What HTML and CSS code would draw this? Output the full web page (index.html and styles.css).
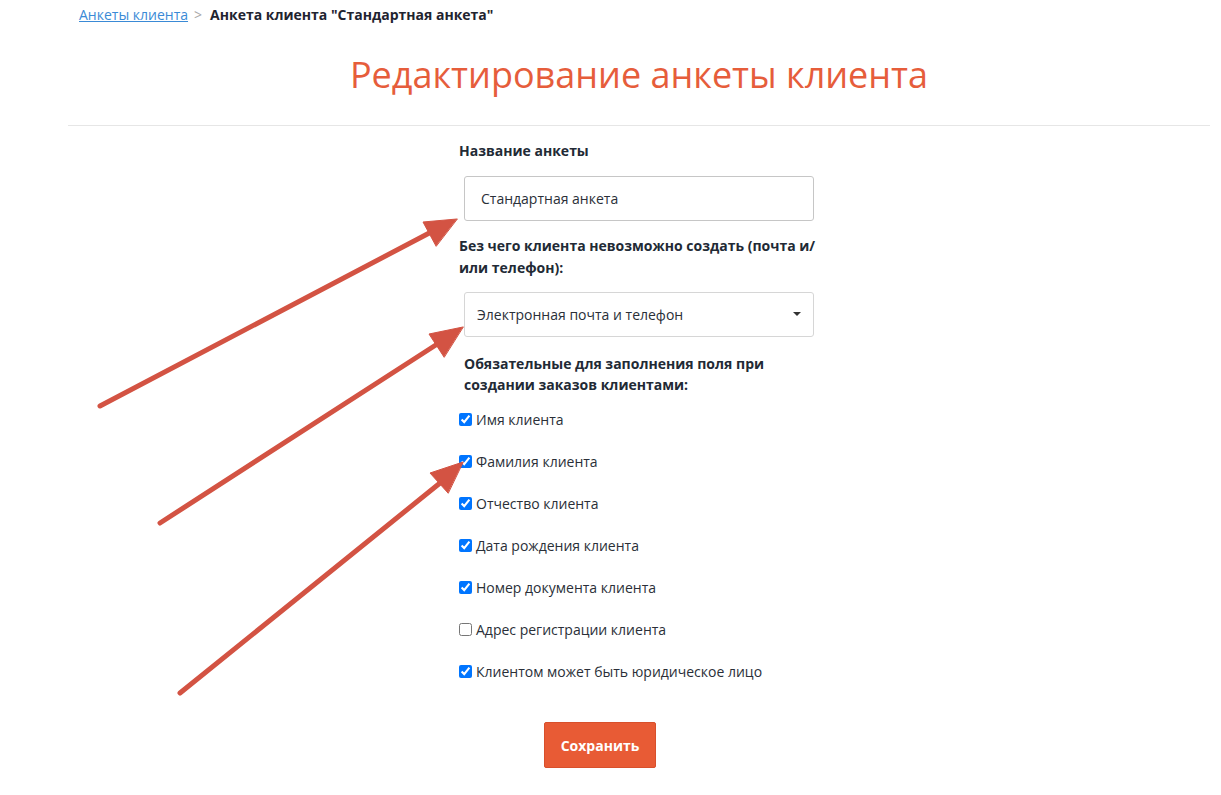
FILE: index.html
```html
<!DOCTYPE html>
<html lang="ru">
<head>
<meta charset="utf-8">
<title>Редактирование анкеты клиента</title>
<link rel="stylesheet" href="styles.css">
</head>
<body>
<div class="page">
  <nav class="crumbs">
    <a href="#" class="crumb-link">Анкеты клиента</a>
    <span class="crumb-sep">&gt;</span>
    <span class="crumb-current">Анкета клиента "Стандартная анкета"</span>
  </nav>
  <h1 class="title">Редактирование анкеты клиента</h1>
  <hr class="divider">
  <form class="form">
    <div class="label l1">Название анкеты</div>
    <input class="text-input" type="text" value="Стандартная анкета">
    <div class="label l2">Без чего клиента невозможно создать (почта и/или телефон):</div>
    <div class="select-wrap">
      <select class="select">
        <option>Электронная почта и телефон</option>
      </select>
    </div>
    <div class="label l3">Обязательные для заполнения поля при создании заказов клиентами:</div>
    <div class="checks">
      <label class="check"><input type="checkbox" checked><span>Имя клиента</span></label>
      <label class="check"><input type="checkbox" checked><span>Фамилия клиента</span></label>
      <label class="check"><input type="checkbox" checked><span>Отчество клиента</span></label>
      <label class="check"><input type="checkbox" checked><span>Дата рождения клиента</span></label>
      <label class="check"><input type="checkbox" checked><span>Номер документа клиента</span></label>
      <label class="check"><input type="checkbox"><span>Адрес регистрации клиента</span></label>
      <label class="check"><input type="checkbox" checked><span>Клиентом может быть юридическое лицо</span></label>
    </div>
    <div class="actions">
      <button type="button" class="save">Сохранить</button>
    </div>
  </form>
</div>
<svg class="arrows" width="1221" height="795" viewBox="0 0 1221 795">
  <g stroke="#d35343" stroke-width="5" stroke-linecap="round" fill="#d35343">
    <line x1="100" y1="406" x2="435" y2="230"/>
    <polygon points="457,219 423,222 436,246" stroke-width="1" stroke-linejoin="round"/>
    <line x1="160" y1="523" x2="442" y2="341"/>
    <polygon points="463,327 429,334 444,357" stroke-width="1" stroke-linejoin="round"/>
    <line x1="180" y1="693" x2="445" y2="479"/>
    <polygon points="463,462 430,473 448,493" stroke-width="1" stroke-linejoin="round"/>
  </g>
</svg>
</body>
</html>
```

FILE: styles.css
```css
html, body {
  margin: 0;
  padding: 0;
  background: #ffffff;
}
body {
  font-family: "Open Sans", "Liberation Sans", sans-serif;
  color: #222a35;
  position: relative;
  width: 1221px;
  height: 795px;
  overflow: hidden;
}
.page {
  margin-left: 68px;
  width: 1142px;
}
.crumbs {
  padding: 5px 0 0 11px;
  font-size: 14px;
  line-height: 20px;
  display: flex;
  gap: 6px;
  align-items: baseline;
}
.crumb-link {
  color: #3a8ad6;
  text-decoration: underline;
}
.crumb-sep {
  color: #a8a8a8;
  margin-right: 2px;
}
.crumb-current {
  font-weight: 700;
  color: #1f2430;
}
.title {
  margin: 25px 0 0;
  text-align: center;
  font-size: 36px;
  line-height: 50px;
  font-weight: 400;
  color: #e65d3b;
}
.divider {
  margin: 25px 0 0;
  border: 0;
  border-top: 1px solid #e6e6e6;
  height: 0;
}
.form {
  width: 360px;
  margin: 15px auto 0;
  display: flex;
  flex-direction: column;
}
.label {
  font-size: 14px;
  font-weight: 700;
  color: #222a35;
}
.l1 { line-height: 20px; }
.l2 { line-height: 22px; margin-top: 14px; }
.l3 { line-height: 21px; margin: 16px 5px 0; }
.text-input {
  box-sizing: border-box;
  margin: 15px 5px 0;
  width: 350px;
  height: 45px;
  border: 1px solid #c6c6c6;
  border-radius: 3px;
  padding: 0 16px;
  font-family: inherit;
  font-size: 14px;
  color: #2a2f38;
  background: #fff;
}
.select-wrap {
  position: relative;
  margin: 13px 5px 0;
  width: 350px;
}
.select-wrap::after {
  content: "";
  position: absolute;
  right: 13px;
  top: 20px;
  border-left: 4px solid transparent;
  border-right: 4px solid transparent;
  border-top: 4px solid #333;
  pointer-events: none;
}
.select {
  box-sizing: border-box;
  width: 350px;
  height: 45px;
  border: 1px solid #d6d6d6;
  border-radius: 3px;
  padding: 0 12px;
  font-family: inherit;
  font-size: 14px;
  color: #2a2f38;
  background: #fff;
  appearance: none;
  -webkit-appearance: none;
}
.checks {
  margin-top: 15px;
  display: flex;
  flex-direction: column;
  gap: 22px;
}
.check {
  display: flex;
  align-items: center;
  font-size: 14px;
  line-height: 20px;
  color: #2a2f38;
  height: 20px;
}
.check input {
  margin: 0 4px 0 0;
  width: 13px;
  height: 13px;
  position: relative;
  top: -1px;
}
.actions {
  margin-top: 40px;
  display: flex;
  justify-content: flex-start;
  padding-left: 85px;
}
.save {
  width: 112px;
  height: 46px;
  background: #e85b35;
  border: 1px solid #d8502c;
  border-radius: 2px;
  color: #fff;
  font-family: inherit;
  font-size: 14px;
  font-weight: 700;
}
.arrows {
  position: absolute;
  left: 0;
  top: 0;
  pointer-events: none;
}
```
